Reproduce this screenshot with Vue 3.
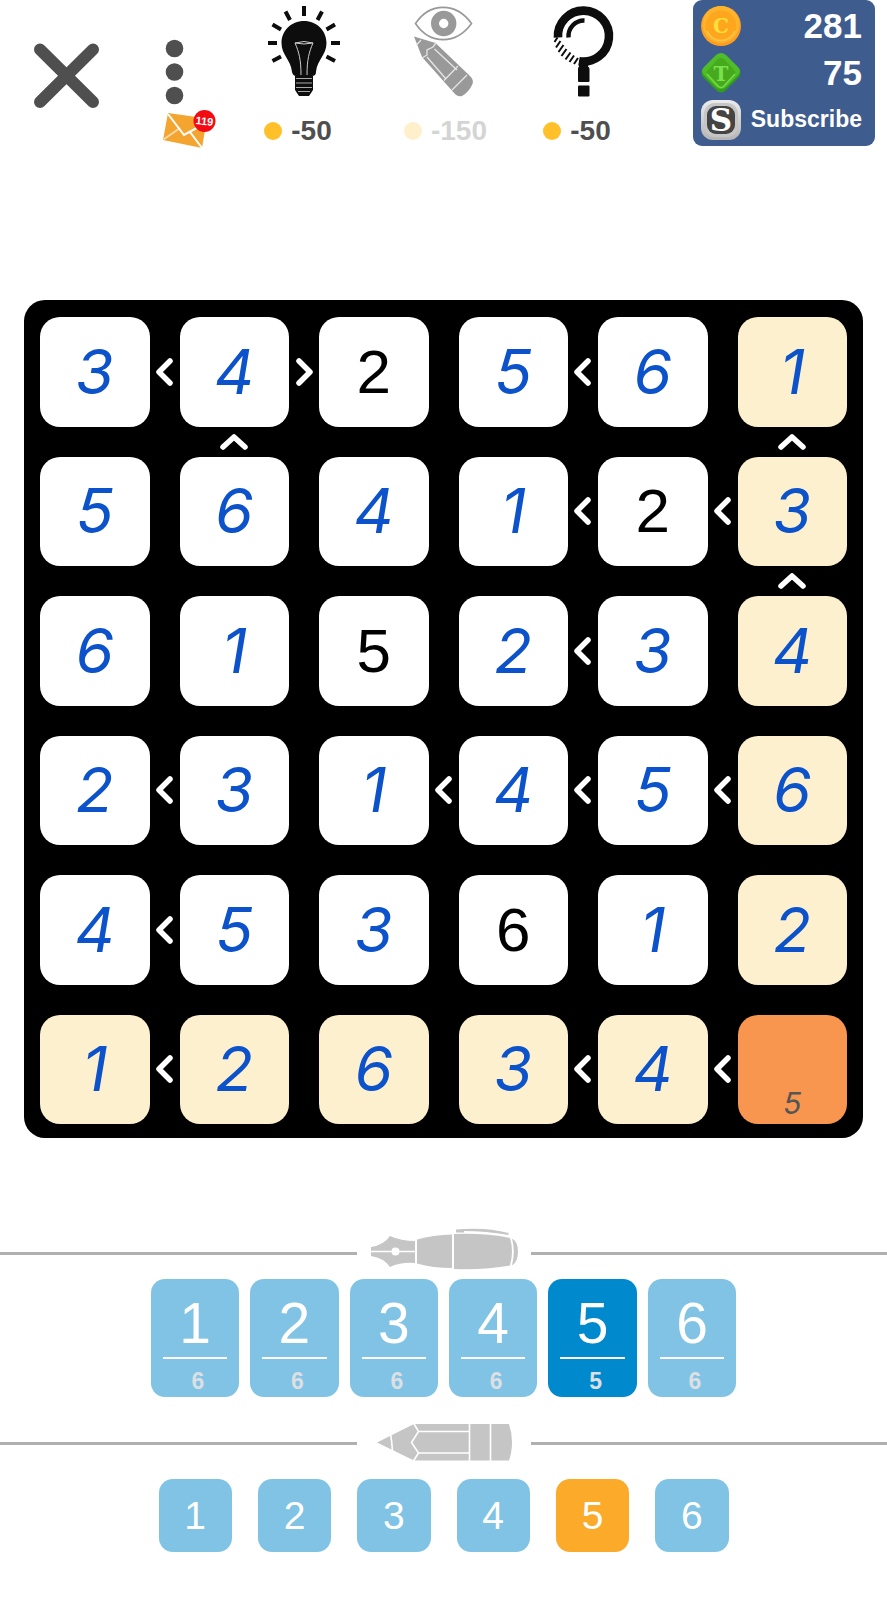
<script setup>
import { ref } from 'vue'

// "p" marks a printed clue, "h" a highlighted cell, "s" the selected cell
const rows = [
  ['3', '4', '2p', '5', '6', '1h'],
  ['5', '6', '4', '1', '2p', '3h'],
  ['6', '1', '5p', '2', '3', '4h'],
  ['2', '3', '1', '4', '5', '6h'],
  ['4', '5', '3', '6p', '1', '2h'],
  ['1h', '2h', '6h', '3h', '4h', 's'],
]
const across = ['<> < ', '   <<', '   < ', '< <<<', '<    ', '<  <<']
const down = [' ^   ^', '     ^', '      ', '      ', '      ']

const slots = []
rows.forEach((row, r) => {
  row.forEach((code, c) => {
    slots.push({
      kind: 'cell',
      value: code.replace(/[phs]/, ''),
      printed: code.includes('p'),
      lit: code.includes('h'),
      selected: code === 's',
      name: `Row ${r + 1}, column ${c + 1}`,
    })
    if (c < 5) slots.push({ kind: 'gap', sign: across[r][c] })
  })
  if (r < 5) {
    for (let c = 0; c < 6; c++) {
      slots.push({ kind: 'gap', sign: down[r][c] })
      if (c < 5) slots.push({ kind: 'gap', sign: ' ' })
    }
  }
})

const signPaths = {
  '<': 'M20 4 9 15 20 26',
  '>': 'M10 4 21 15 10 26',
  '^': 'M4 20 15 10 26 20',
}

const penKeys = [
  { n: 1, used: 6 },
  { n: 2, used: 6 },
  { n: 3, used: 6 },
  { n: 4, used: 6 },
  { n: 5, used: 5 },
  { n: 6, used: 6 },
]
const active = ref(5)
</script>

<template>
  <main class="game">
    <header class="top">
      <button class="plain" aria-label="Close">
        <svg class="close" viewBox="34 43 65 65">
          <path d="M40 49.500 93 102M93 49.500 40 102" stroke="#4f4f4f" stroke-width="12" stroke-linecap="round" />
        </svg>
      </button>

      <div class="menu-col">
        <button class="plain" aria-label="Menu">
          <svg class="dots" viewBox="132 0 101 108">
            <g fill="#4f4f4f">
              <circle cx="174.500" cy="48.500" r="8.800" />
              <circle cx="174.500" cy="72" r="8.800" />
              <circle cx="174.500" cy="95.500" r="8.800" />
            </g>
          </svg>
        </button>
        <button class="plain" aria-label="Messages">
          <svg class="mail" viewBox="132 108 101 44">
            <path d="M168 113 207 118.500 202 148 163 140Z" fill="#f3a52f" />
            <path d="M163.500 139.500 180 128" fill="none" stroke="#f7d9a8" stroke-width="2" />
            <path d="M190 132 202 148M168 114 184 135 204 124" fill="none" stroke="#fff" stroke-width="2" />
            <circle cx="204.500" cy="121" r="11" fill="#f30b14" />
            <text x="204.500" y="125" text-anchor="middle" transform="rotate(6 204.500 121)" class="badge">119</text>
          </svg>
        </button>
      </div>

      <button class="plain tool" aria-label="Hint, 50 coins">
        <svg class="art" viewBox="250 0 96 100">
          <path d="M304 6V16M285.500 11.500 290 20M322 11.500 317.500 20M272.500 24.500 281 29.500M335 24.500 326.500 29.500M268 43H277M331 43H340M272.500 61 281 56.500M335 61 326.500 56.500" stroke="#0d0d0d" stroke-width="4" fill="none" />
          <path d="M304 21C291 21 281.500 31 281.500 43C281.500 55 291 60 292 72Q293 76 296 76H312Q316 76 316 72C317 60 326.500 55 326.500 43C326.500 31 317 21 304 21Z" fill="#0d0d0d" />
          <path d="M295 76H313V90L309 96H299L295 90Z" fill="#0d0d0d" />
          <path d="M296 78.500H312M296 83H312M296 87.500H312M298 91.500H310" stroke="#aaa" stroke-width="1" />
          <path d="M301 75C301 60 299 52 295 43Q304 40 313 43C309 52 307 60 307 75M295 43Q304 45 313 43" fill="none" stroke="#ccc" stroke-width="1" />
        </svg>
        <span class="cost"><i class="coin-dot"></i>-50</span>
      </button>

      <button class="plain tool" aria-label="Show pencil marks, 150 coins" disabled>
        <svg class="art" viewBox="398 0 96 100">
          <path d="M415.500 23.500C430 2 456 2 471.500 23.500C456 45 430 45 415.500 23.500Z" fill="none" stroke="#999" stroke-width="1.600" />
          <circle cx="443.700" cy="23.500" r="8.700" fill="none" stroke="#999" stroke-width="8" />
          <path d="M414 36.500 435.500 43 470 76Q474 80 472.500 84Q469 92 462 96Q458 97 455 94L422 57Z" fill="#999" />
          <path d="M416.500 45 421 40M422 58 427 55V50L433 47L436 43M427 57 446 79M434.500 49 457 70M444 80.500 458 66M452 90 467 75" fill="none" stroke="#e6e6e6" stroke-width="1.300" />
        </svg>
        <span class="cost faded"><i class="coin-dot"></i>-150</span>
      </button>

      <button class="plain tool" aria-label="Check, 50 coins">
        <svg class="art" viewBox="529 0 96 100">
          <path d="M558 37.500A25.500 25.500 0 1 1 579 61.200" fill="none" stroke="#0d0d0d" stroke-width="8.600" />
          <path d="M579 60H588V66.500Q589.500 67 589.500 69V81Q589.500 82 588.500 82H579Q578 82 578 81V69Q578 67 579 66.500Z" fill="#0d0d0d" />
          <path d="M568.500 37.500A15.500 16 0 0 1 584.500 20.500" fill="none" stroke="#0d0d0d" stroke-width="4.400" />
          <path d="M554.500 42 557.500 37.500M556 47.500 560.500 41M558.500 52 563.500 45M561.500 56 566.500 49M565.500 59.500 570.500 52.500M569.500 62 574 55.500M574 64 578 58" fill="none" stroke="#0d0d0d" stroke-width="2" />
          <rect x="578" y="85.500" width="11.500" height="11" rx="1" fill="#0d0d0d" />
        </svg>
        <span class="cost"><i class="coin-dot"></i>-50</span>
      </button>

      <aside class="wallet">
        <div class="row">
          <svg class="token" viewBox="0 0 40 40">
            <circle cx="20" cy="20" r="20" fill="#ff9d20" />
            <circle cx="20" cy="18.500" r="18.500" fill="#ffb52b" />
            <circle cx="20" cy="20" r="15.500" fill="#ffa61f" />
            <path d="M6 25A15 15 0 0 0 34 25" fill="none" stroke="#ffc94a" stroke-width="1.500" />
            <text x="20" y="27" text-anchor="middle" class="letter gold">C</text>
          </svg>
          <span class="amount">281</span>
        </div>
        <div class="row">
          <svg class="token" viewBox="0 0 40 40">
            <path d="M15 3Q20-1 25 3L37 15Q42 20 37 25L25 37Q20 42 15 37L3 25Q-2 20 3 15Z" fill="#339c1e" />
            <path d="M15 2Q20-2 25 2L37 14Q41 18 37 22L25 34Q20 38 15 34L3 22Q-1 18 3 14Z" fill="#4fbd27" />
            <path d="M17 6Q20 4 23 6L33 17Q36 20 33 23L23 33Q20 36 17 33L7 23Q4 20 7 17Z" fill="#47a91c" />
            <path d="M6 21 17 33Q20 36 23 33L34 21" fill="none" stroke="#77da49" stroke-width="1.500" />
            <text x="20" y="28" text-anchor="middle" class="letter green">T</text>
          </svg>
          <span class="amount">75</span>
        </div>
        <button class="plain row">
          <svg class="token" viewBox="0 0 40 40">
            <defs>
              <linearGradient id="silver" x1="0" y1="0" x2="0" y2="1">
                <stop offset="0" stop-color="#ececec" />
                <stop offset="1" stop-color="#b4b4b4" />
              </linearGradient>
            </defs>
            <rect width="40" height="40" rx="12" fill="url(#silver)" />
            <rect x="3" y="3" width="34" height="34" rx="11" fill="#c6c6c6" />
            <rect x="6" y="6" width="28" height="28" rx="9" fill="#444" />
            <text x="20" y="31" text-anchor="middle" class="letter ess">S</text>
          </svg>
          <span class="subscribe">Subscribe</span>
        </button>
      </aside>
    </header>

    <section class="board" aria-label="Puzzle board">
      <template v-for="(slot, i) in slots" :key="i">
        <button
          v-if="slot.kind === 'cell'"
          class="cell"
          :class="{ printed: slot.printed, lit: slot.lit, selected: slot.selected }"
          :aria-label="slot.name"
        >
          <span v-if="slot.selected" class="note">5</span>
          <template v-else>{{ slot.value }}</template>
        </button>
        <span v-else class="gap">
          <svg v-if="signPaths[slot.sign]" viewBox="0 0 30 30">
            <path :d="signPaths[slot.sign]" fill="none" stroke="#fff" stroke-width="5.500" stroke-linecap="round" stroke-linejoin="round" />
          </svg>
        </span>
      </template>
    </section>

    <div class="divider pen">
      <svg viewBox="356 1228 174 50">
        <g fill="#c5c5c5">
          <path d="M370 1247Q383 1245 389 1236Q400 1241 414 1241V1263Q400 1262 389 1267Q383 1258 370 1256Z" />
          <path d="M416 1239.500Q432 1235 451 1234.500V1268Q432 1268 416 1263.500Z" />
          <path d="M453 1234Q485 1233 509 1238Q513 1251 509 1265.500Q485 1270 453 1269Z" />
          <path d="M511 1238.500Q517 1242 517 1251.500Q517 1262 511 1265.500Q514.500 1251 511 1238.500Z" />
          <path d="M455 1229.500Q485 1227 507.500 1233V1235Q485 1231 463 1231V1232.500H455Z" />
        </g>
        <path d="M370 1251.500H414" stroke="#fff" stroke-width="1.600" />
        <circle cx="394.500" cy="1251.500" r="4" fill="#fff" />
      </svg>
    </div>

    <nav class="keys" aria-label="Pen numbers">
      <button
        v-for="key in penKeys"
        :key="key.n"
        class="key"
        :class="{ on: key.n === active }"
        @click="active = key.n"
      >
        <span class="digit">{{ key.n }}</span>
        <span class="used">{{ key.used }}</span>
      </button>
    </nav>

    <div class="divider pencil">
      <svg viewBox="356 1418 174 50">
        <path d="M376 1442.500 413 1424H508Q511 1433 511 1442Q511 1452 508 1460.500H413Z" fill="#c5c5c5" />
        <path d="M389.500 1434Q391 1442 391.500 1451M412.500 1423 417.500 1431.500 410.500 1442.500 417.500 1453 412.500 1461M417.500 1431.500H468M417.500 1453H468M468.500 1423V1461M489.500 1423V1461" fill="none" stroke="#fff" stroke-width="1.600" />
      </svg>
    </div>

    <nav class="notes" aria-label="Pencil numbers">
      <button
        v-for="n in 6"
        :key="n"
        class="note-key"
        :class="{ on: n === active }"
        @click="active = n"
      >{{ n }}</button>
    </nav>
  </main>
</template>

<style>
body {
  margin: 0;
  background: #fff;
}
</style>

<style scoped>
.game {
  font-family: "Liberation Sans", Arial, sans-serif;
  padding-bottom: 48px;
}
button {
  font: inherit;
  border: 0;
  padding: 0;
  margin: 0;
  cursor: pointer;
}
svg {
  display: block;
}
.plain {
  background: none;
  color: inherit;
}
.top {
  display: grid;
  grid-template-columns: 132fr 101fr 130fr 165fr 98fr 67fr 182fr 12fr;
  align-items: start;
}
.close {
  width: 65px;
  height: 65px;
  margin: 43px auto 0;
}
.menu-col,
.tool {
  display: flex;
  flex-direction: column;
  align-items: center;
}
.dots {
  width: 101px;
  height: 108px;
}
.mail {
  width: 101px;
  height: 44px;
}
.badge {
  font-size: 11px;
  font-weight: 700;
  fill: #fff;
}
.art {
  width: 96px;
  height: 100px;
}
.cost {
  display: flex;
  align-items: center;
  gap: 9px;
  margin-top: 15px;
  font-size: 28px;
  font-weight: 700;
  line-height: 32px;
  color: #4f4f4f;
}
.coin-dot {
  width: 18px;
  height: 18px;
  border-radius: 50%;
  background: #ffc02a;
}
.faded {
  opacity: 0.24;
}
.wallet {
  grid-column: 7;
  box-sizing: border-box;
  padding: 2px 13px 3px 8px;
  border-radius: 9px;
  background: #3f5c8f;
  color: #fff;
  font-weight: 700;
}
.row {
  display: flex;
  width: 100%;
  height: 47px;
  align-items: center;
  justify-content: space-between;
}
.token {
  flex: none;
  width: 40px;
  height: 40px;
}
.amount {
  font-size: 35px;
}
.subscribe {
  font-size: 23px;
  font-weight: 700;
}
.letter {
  font-family: "DejaVu Serif", serif;
  font-weight: 700;
  font-size: 20px;
}
.gold {
  fill: #ffe03a;
}
.green {
  fill: #7be04e;
}
.ess {
  font-size: 31px;
  fill: #fff;
}
.board {
  display: grid;
  grid-template-columns: repeat(5, 1fr 30px) 1fr;
  margin: 148px 24px 0;
  padding: 17px 16px 14px;
  border-radius: 21px;
  background: #000;
}
.cell {
  display: flex;
  align-items: center;
  justify-content: center;
  aspect-ratio: 1;
  min-width: 0;
  border-radius: 20px;
  background: #fff;
  color: #0b52cb;
  font-family: Inter, "Open Sans", sans-serif;
  font-style: italic;
  font-size: 62px;
  line-height: 64px;
}
.printed {
  color: #000;
  font-family: "Liberation Sans", Arial, sans-serif;
  font-style: normal;
}
.lit {
  background: #fcf0cf;
}
.selected {
  align-items: flex-end;
  background: #f8964f;
}
.note {
  padding-bottom: 3px;
  color: #555;
  font-size: 30px;
  line-height: 36px;
}
.gap {
  display: flex;
  align-items: center;
  justify-content: center;
  min-height: 30px;
}
.gap svg {
  width: 30px;
  height: 30px;
}
.divider {
  display: flex;
  align-items: center;
}
.divider::before,
.divider::after {
  content: "";
  flex: 1;
  height: 3px;
  background: #b0b0b0;
}
.divider svg {
  width: 174px;
  height: 50px;
}
.pen {
  margin-top: 90px;
}
.pencil {
  margin-top: 21px;
}
.keys {
  display: grid;
  grid-template-columns: repeat(6, 1fr);
  gap: 11px;
  width: 66%;
  margin: 1px auto 0;
}
.key {
  display: flex;
  flex-direction: column;
  align-items: center;
  padding: 12px 12px 0;
  height: 118px;
  border-radius: 14px;
  background: #80c3e4;
  color: #fff;
}
.key.on {
  background: #008acd;
}
.digit {
  width: 100%;
  padding-bottom: 2px;
  border-bottom: 2px solid #fff;
  font-size: 57px;
  line-height: 64px;
}
.used {
  margin-top: 8px;
  padding-left: 6px;
  color: #dcdfe3;
  font-size: 23px;
  font-weight: 700;
  line-height: 28px;
}
.notes {
  display: grid;
  grid-template-columns: repeat(6, 1fr);
  gap: 26px;
  width: min(570px, 90%);
  margin: 11px auto 0;
}
.note-key {
  aspect-ratio: 1;
  border-radius: 14px;
  background: #80c3e4;
  color: #fff;
  font-size: 39px;
}
.note-key.on {
  background: #fbaa2a;
}
</style>
